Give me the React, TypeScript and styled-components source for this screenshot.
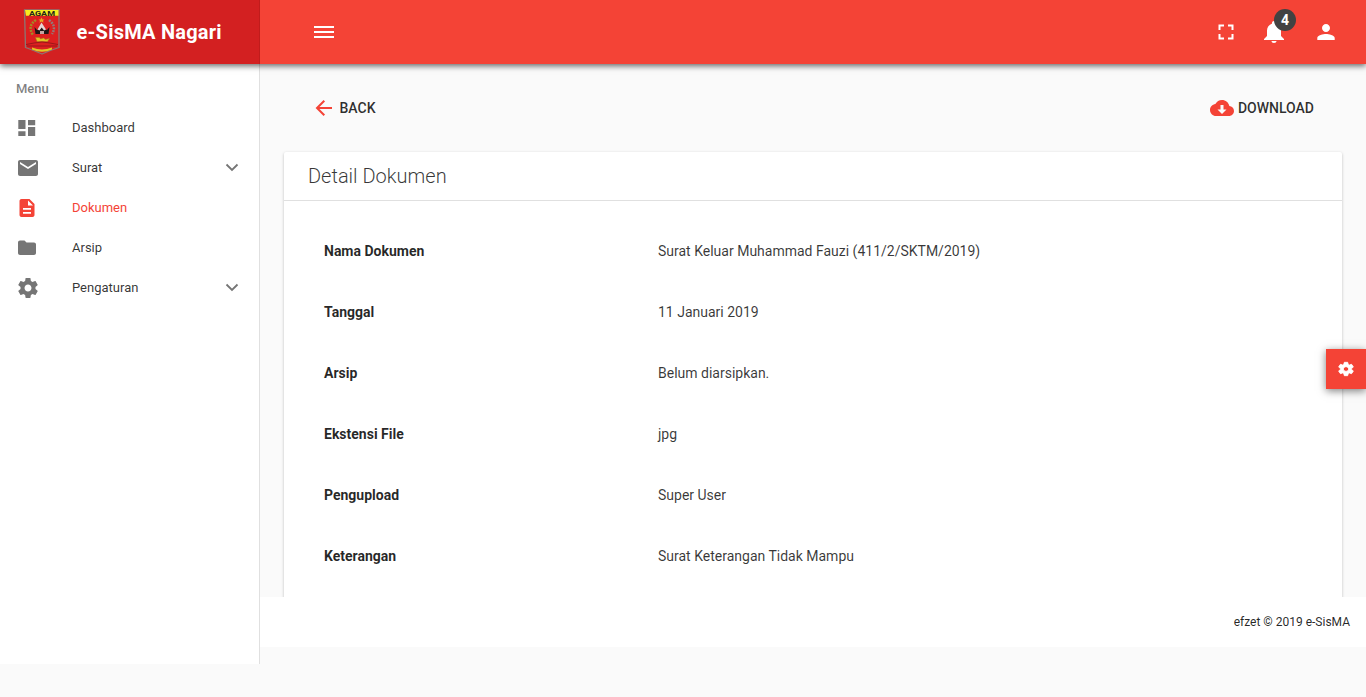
import React from 'react';
import styled, { createGlobalStyle } from 'styled-components';

const Global = createGlobalStyle`
  *, *::before, *::after { box-sizing: border-box; }
  html, body { margin: 0; height: 100%; overflow: hidden; }
  body { background: #fafafa; color: rgba(0, 0, 0, 0.85); font: 400 14px/20px Roboto, sans-serif; }
  svg { display: block; flex: none; }
`;

const Page = styled.div`
  height: 697px;
  display: flex;
  flex-direction: column;
`;

const Header = styled.header`
  position: relative;
  z-index: 2;
  display: flex;
  height: 64px;
  flex: none;
  background: #f44336;
  color: #fff;
  box-shadow: 0 2px 6px rgba(0, 0, 0, 0.6);
`;

const Brand = styled.div`
  display: flex;
  align-items: center;
  width: 260px;
  padding-left: 23px;
  background: #d32021;
  border-right: 1px solid #c01c1c;
`;

const BrandName = styled.span`
  margin-left: 15.5px;
  font-size: 20px;
  font-weight: 700;
  line-height: 24px;
  letter-spacing: 0.22px;
`;

const HeaderBar = styled.div`
  flex: 1;
  display: flex;
  align-items: center;
  justify-content: space-between;
  padding: 0 28px 0 54px;
`;

const HeaderActions = styled.div`
  display: flex;
  align-items: center;
`;

const BellWrap = styled.div`
  position: relative;
  margin: 0 28px 0 24px;
`;

const Badge = styled.span`
  position: absolute;
  left: 12px;
  top: -11px;
  width: 22px;
  height: 22px;
  border-radius: 50%;
  background: #424242;
  font-size: 14px;
  font-weight: 700;
  line-height: 22px;
  text-align: center;
`;

const Body = styled.div`
  display: flex;
  align-items: flex-start;
`;

const Sidebar = styled.aside`
  width: 260px;
  height: 600px;
  flex: none;
  background: #fff;
  border-right: 1px solid #e0e0e0;
`;

const MenuLabel = styled.div`
  padding: 15px 16px 0;
  height: 44px;
  font-size: 13px;
  font-weight: 500;
  line-height: 20px;
  color: rgba(0, 0, 0, 0.5);
`;

const MenuItem = styled.a<{ $active?: boolean }>`
  display: flex;
  align-items: center;
  height: 40px;
  padding: 0 20px 0 16px;
  font-size: 13px;
  color: ${p => (p.$active ? '#f44336' : 'rgba(0, 0, 0, 0.8)')};

  > svg { color: ${p => (p.$active ? '#f44336' : '#757575')}; }
`;

const MenuText = styled.span`
  flex: 1;
  margin: -1px 0 0 32px;
`;

const Main = styled.main`
  flex: 1;
  min-width: 0;
`;

const Content = styled.div`
  height: 533px;
  overflow: hidden;
  padding: 24px 24px 0;
`;

const Toolbar = styled.div`
  display: flex;
  justify-content: space-between;
  align-items: center;
  height: 40px;
  margin-bottom: 24px;
  padding: 0 28px 0 31px;
`;

const ToolButton = styled.a<{ $gap: number }>`
  display: flex;
  align-items: center;
  gap: ${p => p.$gap}px;
  font-weight: 500;
  color: rgba(0, 0, 0, 0.82);

  > svg { color: #f44336; }
`;

const Card = styled.section`
  height: 560px;
  background: #fff;
  border-radius: 2px;
  box-shadow: 0 1px 3px rgba(0, 0, 0, 0.25);
`;

const CardHeader = styled.h1`
  margin: 0;
  height: 49px;
  padding-left: 24px;
  border-bottom: 1px solid #e0e0e0;
  font-size: 20px;
  font-weight: 300;
  line-height: 48px;
  color: rgba(0, 0, 0, 0.78);
`;

const Details = styled.dl`
  margin: 0;
  padding: 19px 40px 0;
`;

const DetailRow = styled.div`
  display: grid;
  grid-template-columns: 334px 1fr;
  align-items: center;
  height: 61px;
`;

const Term = styled.dt`
  font-weight: 700;
`;

const Value = styled.dd`
  margin: 0;
  color: rgba(0, 0, 0, 0.78);
`;

const Footer = styled.footer`
  height: 50px;
  padding: 15px 16px;
  background: #fff;
  font-size: 12px;
  line-height: 20px;
  text-align: right;
`;

const SettingsTab = styled.button`
  position: fixed;
  z-index: 3;
  right: 0;
  top: 349px;
  width: 40px;
  height: 40px;
  display: grid;
  place-items: center;
  padding: 0;
  border: 0;
  background: #f44336;
  color: #fff;
  box-shadow: 0 2px 8px rgba(0, 0, 0, 0.5);
`;

const paths = {
  fullscreen: 'M6.500 14h-2v5.500H10v-2H6.500V14zM4.500 10h2V6.500H10v-2H4.500V10zM17.500 17.500H14v2h5.500V14h-2v3.500zM14 4.500v2h3.500V10h2V4.500H14z',
  person: 'M12 12c2.21 0 4-1.79 4-4s-1.79-4-4-4-4 1.79-4 4 1.790 4 4 4zm0 2c-2.670 0-8.700 1.340-8.700 4v2h17.400v-2c0-2.660-6.030-4-8.700-4z',
  dashboard: 'M2.300 4h7.200v9H2.300zM12 4h7.200v5.200H12zM2.300 15.200h7.200V20H2.300zM12 11h7.200v9H12z',
  mail: 'M20 4H4c-1.1 0-1.99.9-1.99 2L2 18c0 1.1.9 2 2 2h16c1.1 0 2-.9 2-2V6c0-1.1-.9-2-2-2zm0 4l-8 5-8-5V6l8 5 8-5v2z',
  folder: 'M4 4.500h4.500l2 2H18c1.100 0 2 .9 2 2V17c0 1.100-.9 2-2 2H4c-1.100 0-2-.9-2-2V6.500c0-1.100.9-2 2-2z',
  file: 'M5 3h8.500L18.500 8v11c0 1.100-.9 2-2 2H5.500c-1.100 0-2-.9-2-2V5c0-1.100.9-2 2-2zM12 4.500V9.500H17zM7 12v1.800h8V12zM7 16v1.800h8V16z',
  gear: 'M19.43 12.98c.04-.32.07-.64.07-.98s-.03-.66-.07-.98l2.11-1.65c.19-.15.24-.42.12-.64l-2-3.46c-.12-.22-.39-.3-.61-.22l-2.49 1c-.52-.4-1.080-.73-1.690-.98l-.38-2.650C14.460 2.180 14.250 2 14 2h-4c-.25 0-.46.18-.49.42l-.38 2.650c-.61.25-1.170.59-1.690.98l-2.490-1c-.23-.09-.49 0-.61.22l-2 3.460c-.13.22-.07.49.12.64l2.110 1.650c-.04.32-.07.65-.07.98s.03.66.07.98l-2.110 1.650c-.19.15-.24.42-.12.64l2 3.460c.12.22.39.3.61.22l2.490-1c.52.4 1.080.73 1.690.98l.38 2.650c.03.24.24.42.49.42h4c.25 0 .46-.18.49-.42l.38-2.650c.61-.25 1.170-.59 1.690-.98l2.490 1c.23.09.49 0 .61-.22l2-3.460c.12-.22.07-.49-.12-.64l-2.110-1.650zM12 15.500c-1.930 0-3.500-1.570-3.500-3.500s1.570-3.500 3.500-3.500 3.500 1.570 3.500 3.500-1.570 3.500-3.500 3.500z',
  bell: 'M12 23c1.500 0 2.500-.8 2.500-2h-5c0 1.200 1 2 2.500 2zM19 16v-5.500c0-3.400-2-6-5-6.800V3c0-1.100-.8-2-2-2s-2 .9-2 2v.7c-3 .8-5 3.400-5 6.800V16l-3 3v1h20v-1z',
  cloud: 'M19.35 10.04C18.67 6.590 15.640 4 12 4 9.110 4 6.600 5.640 5.350 8.040 2.340 8.360 0 10.910 0 14c0 3.310 2.690 6 6 6h13c2.760 0 5-2.240 5-5 0-2.640-2.050-4.780-4.650-4.960zM16.500 13.500l-4.500 4.500-4.500-4.500h3V9h3v4.500h3z',
};

const Icon = ({ name, size = 24 }: { name: keyof typeof paths; size?: number }) => (
  <svg width={size} height={size} viewBox="0 0 24 24" fill="currentColor" fillRule="evenodd">
    <path d={paths[name]} />
  </svg>
);

const Cog = () => (
  <svg width="18" height="16" viewBox="0 0 24 24" preserveAspectRatio="none" fill="currentColor" stroke="currentColor" strokeWidth="1.2" strokeLinejoin="round">
    <path d={paths.gear} fillRule="evenodd" />
  </svg>
);

const Chevron = () => (
  <svg width="14" height="14" viewBox="0 0 14 14" fill="none" stroke="currentColor" strokeWidth="1.8">
    <path d="M1.500 3.500 7 9l5.500-5.500" />
  </svg>
);

const BackArrow = () => (
  <svg width="18" height="18" viewBox="0 0 18 18" fill="none" stroke="currentColor" strokeWidth="2">
    <path d="M17 9H3M9.300 1.700 2 9l7.300 7.300" />
  </svg>
);

const CrestText = styled.text`
  font: 700 7px Roboto, sans-serif;
`;

const Crest = () => (
  <svg width="38" height="46" viewBox="0 0 38 46">
    <path d="M1.500 1h34.500v37.500Q28 41 19 45 9 41 2.500 38.500z" fill="#dc2020" stroke="#8b7774" strokeWidth="1.300" />
    <path d="M2 1h33.500v5.800H3z" fill="#f6eb20" />
    <CrestText x="6" y="6.500" fill="#27251a" textLength="26" lengthAdjust="spacingAndGlyphs">AGAM</CrestText>
    <path d="M13 11Q4 17 10 26" fill="none" stroke="#a38b25" strokeWidth="2.500" strokeDasharray="2 1" />
    <path d="M26 11q8 6 3 14" fill="none" stroke="#927b78" strokeWidth="2.500" strokeDasharray="2 1" />
    <path d="m18.500 8.500 1 2h2l-1.500 1.300.5 2-2-1.200-2 1.200.5-2-1.500-1.300h2z" fill="#e9a622" />
    <path d="m11.500 18 2.500 3 3-1 2-2 2 2 3 1 2.500-3-1 7H12.500z" fill="#201616" />
    <path d="m14.500 20.500 4-7 4.500 7-2 1-2.300-3-2.300 3z" fill="#e5d5d2" />
    <path d="M17 22h4v3h-4z" fill="#c7a6a4" />
    <path d="M12.500 28.500h4l1 1.500 3-1 2 1.500 4-1-2 3H14z" fill="#e3c326" stroke="#a77a18" strokeWidth=".5" />
    <path d="M3 35.500 11 34l8-1 8 1 8 1.500M4 37h30" fill="none" stroke="#9c1719" />
    <path d="M9 38.500q10 4 20 0v2q-10 4.500-20 0z" fill="#dfca25" />
  </svg>
);

const menu: { icon: keyof typeof paths; label: string; active?: boolean; expandable?: boolean }[] = [
  { icon: 'dashboard', label: 'Dashboard' },
  { icon: 'mail', label: 'Surat', expandable: true },
  { icon: 'file', label: 'Dokumen', active: true },
  { icon: 'folder', label: 'Arsip' },
  { icon: 'gear', label: 'Pengaturan', expandable: true },
];

const details = [
  ['Nama Dokumen', 'Surat Keluar Muhammad Fauzi (411/2/SKTM/2019)'],
  ['Tanggal', '11 Januari 2019'],
  ['Arsip', 'Belum diarsipkan.'],
  ['Ekstensi File', 'jpg'],
  ['Pengupload', 'Super User'],
  ['Keterangan', 'Surat Keterangan Tidak Mampu'],
];

export default function App() {
  return (
    <Page>
      <Global />
      <Header>
        <Brand>
          <Crest />
          <BrandName>e-SisMA Nagari</BrandName>
        </Brand>
        <HeaderBar>
          <svg width="20" height="12" fill="currentColor"><path d="M0 0h20v2H0zM0 5h20v2H0zM0 10h20v2H0z" /></svg>
          <HeaderActions>
            <Icon name="fullscreen" />
            <BellWrap>
              <Icon name="bell" />
              <Badge>4</Badge>
            </BellWrap>
            <Icon name="person" />
          </HeaderActions>
        </HeaderBar>
      </Header>
      <Body>
        <Sidebar>
          <MenuLabel>Menu</MenuLabel>
          {menu.map(m => (
            <MenuItem key={m.label} $active={m.active}>
              <Icon name={m.icon} />
              <MenuText>{m.label}</MenuText>
              {m.expandable && <Chevron />}
            </MenuItem>
          ))}
        </Sidebar>
        <Main>
          <Content>
            <Toolbar>
              <ToolButton $gap={6.5}><BackArrow />BACK</ToolButton>
              <ToolButton $gap={4}><Icon name="cloud" />DOWNLOAD</ToolButton>
            </Toolbar>
            <Card>
              <CardHeader>Detail Dokumen</CardHeader>
              <Details>
                {details.map(([term, value]) => (
                  <DetailRow key={term}>
                    <Term>{term}</Term>
                    <Value>{value}</Value>
                  </DetailRow>
                ))}
              </Details>
            </Card>
          </Content>
          <Footer>efzet © 2019 e-SisMA</Footer>
        </Main>
      </Body>
      <SettingsTab aria-label="Settings"><Cog /></SettingsTab>
    </Page>
  );
}
